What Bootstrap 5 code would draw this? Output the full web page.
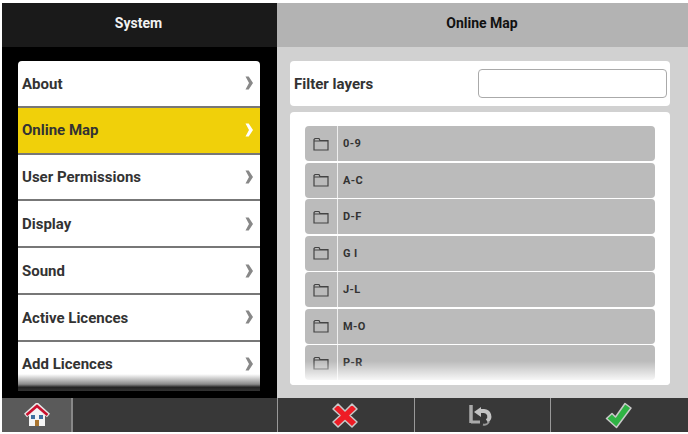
<!DOCTYPE html>
<html lang="en">
<head>
<meta charset="utf-8">
<title>Online Map</title>
<link href="https://cdn.jsdelivr.net/npm/bootstrap@5.3.0/dist/css/bootstrap.min.css" rel="stylesheet">
<style>
html,body{height:100%;overflow:hidden;background:#fff}
body{font-family:Roboto,"Liberation Sans",sans-serif;color:#333}
.shell{width:688px;height:434px;padding:3px 0 2px 2px}
.pane-left{width:275px}
.pane-right{width:411px}
.pane-head{height:44px;font-size:14px;font-weight:700;padding-bottom:3px}
.head-dark{background:#1a1a1a;color:#f2f2f2;padding-right:2px}
.head-light{background:#b3b3b3;color:#111;padding-right:1px}
.body-dark{background:#000;height:351px;padding:14px 17px 7px 16px}
.body-light{background:#d1d1d1;height:351px;padding:14px 18px 13px 13px}
.menu-box{height:330px;background:#fff;border-radius:4px 4px 0 0;overflow:hidden;position:relative}
.menu-row{height:46.8px;flex:none;border-bottom:2px solid #777;padding:1px 4px 0;font-size:15px;font-weight:700;color:#333}
.menu-row.active-row{background:#f0d00a}
.chev{width:8px;height:14px;margin:0 3px 1px 0;flex:none}
.fade-dark{position:absolute;left:0;right:0;bottom:0;height:17px;background:linear-gradient(to bottom,rgba(255,255,255,0),#8a8a8a 60%,#222 78%,#333 100%)}
.filter-box{height:45px;background:#fff;border-radius:4px;padding:0 3px 0 4px;font-size:15px;font-weight:700;margin-bottom:6px}
.filter-label{padding-top:2px}
.filter-input{width:189px;height:29px;border:1px solid #aaa;border-radius:4px;background:#fff}
.layer-box{height:273px;background:#fff;border-radius:4px;padding:14px 15px 0;overflow:hidden;position:relative}
.layer-row{height:35px;flex:none;margin-bottom:1.500px;background:#bbb;border-radius:4px;font-size:11px;font-weight:700;color:#333;letter-spacing:.4px}
.layer-icon{width:33px;height:100%;flex:none;border-right:1.500px solid #eee}
.layer-name{padding:2px 0 0 5px}
.fade-light{position:absolute;left:0;right:0;bottom:0;height:24px;background:linear-gradient(to bottom,rgba(255,255,255,0),#fff 90%)}
.foot{height:34px;background:#383838}
.foot-home{width:71px;background:#5a5a5a;border-right:2px solid #888}
.foot-cell{width:137px;flex:none;border-left:1.500px solid #999}
.foot-cell.mid-cell{width:136px}
.foot-cell.end-cell{width:138px}
.nudge-icon{margin-right:2px}
.nudge-undo{margin-right:4px}
</style>
</head>
<body>
<div class="shell d-flex">
  <div class="pane-left d-flex flex-column">
    <div class="pane-head head-dark d-flex align-items-center justify-content-center">System</div>
    <div class="body-dark">
      <div class="menu-box d-flex flex-column">
        <div class="menu-row d-flex align-items-center justify-content-between"><span>About</span><svg class="chev" viewBox="0 0 8 14"><path d="M.5.500h3.200L8 7l-4.300 6.500H.5L4 7z" fill="#888"/></svg></div>
        <div class="menu-row active-row d-flex align-items-center justify-content-between"><span>Online Map</span><svg class="chev" viewBox="0 0 8 14"><path d="M.5.500h3.200L8 7l-4.300 6.500H.5L4 7z" fill="#fff"/></svg></div>
        <div class="menu-row d-flex align-items-center justify-content-between"><span>User Permissions</span><svg class="chev" viewBox="0 0 8 14"><path d="M.5.500h3.200L8 7l-4.300 6.500H.5L4 7z" fill="#888"/></svg></div>
        <div class="menu-row d-flex align-items-center justify-content-between"><span>Display</span><svg class="chev" viewBox="0 0 8 14"><path d="M.5.500h3.200L8 7l-4.300 6.500H.5L4 7z" fill="#888"/></svg></div>
        <div class="menu-row d-flex align-items-center justify-content-between"><span>Sound</span><svg class="chev" viewBox="0 0 8 14"><path d="M.5.500h3.200L8 7l-4.300 6.500H.5L4 7z" fill="#888"/></svg></div>
        <div class="menu-row d-flex align-items-center justify-content-between"><span>Active Licences</span><svg class="chev" viewBox="0 0 8 14"><path d="M.5.500h3.200L8 7l-4.300 6.500H.5L4 7z" fill="#888"/></svg></div>
        <div class="menu-row d-flex align-items-center justify-content-between"><span>Add Licences</span><svg class="chev" viewBox="0 0 8 14"><path d="M.5.500h3.200L8 7l-4.300 6.500H.5L4 7z" fill="#888"/></svg></div>
        <div class="fade-dark"></div>
      </div>
    </div>
    <div class="foot d-flex">
      <div class="foot-home d-flex align-items-center justify-content-center">
        <svg width="26" height="24" viewBox="0 0 26 24"><path d="M5 11v12h16V11L13 4z" fill="#f4f4f4"/><path d="M1.500 12.500L13 2l11.500 10.500" fill="none" stroke="#e8e8e8" stroke-width="4.500"/><path d="M2.500 12L13 3l10.500 9" fill="none" stroke="#c8102e" stroke-width="2.500"/><rect x="7" y="12" width="4" height="4" fill="#3f6f9f"/><rect x="15" y="12" width="4" height="4" fill="#3f6f9f"/><rect x="11" y="17" width="4" height="6" fill="#a9742f"/></svg>
      </div>
    </div>
  </div>
  <div class="pane-right d-flex flex-column">
    <div class="pane-head head-light d-flex align-items-center justify-content-center">Online Map</div>
    <div class="body-light">
      <div class="filter-box d-flex align-items-center justify-content-between"><span class="filter-label">Filter layers</span><input class="filter-input" type="text" aria-label="Filter layers"></div>
      <div class="layer-box d-flex flex-column">
        <div class="layer-row d-flex align-items-center"><div class="layer-icon d-flex align-items-center justify-content-center"><svg width="16" height="14" viewBox="0 0 16 14"><path d="M1 2.500V13h14V3.500H7L6 1.500H2z M1 4h14" fill="none" stroke="#444" stroke-width="1.200"/></svg></div><div class="layer-name">0-9</div></div>
        <div class="layer-row d-flex align-items-center"><div class="layer-icon d-flex align-items-center justify-content-center"><svg width="16" height="14" viewBox="0 0 16 14"><path d="M1 2.500V13h14V3.500H7L6 1.500H2z M1 4h14" fill="none" stroke="#444" stroke-width="1.200"/></svg></div><div class="layer-name">A-C</div></div>
        <div class="layer-row d-flex align-items-center"><div class="layer-icon d-flex align-items-center justify-content-center"><svg width="16" height="14" viewBox="0 0 16 14"><path d="M1 2.500V13h14V3.500H7L6 1.500H2z M1 4h14" fill="none" stroke="#444" stroke-width="1.200"/></svg></div><div class="layer-name">D-F</div></div>
        <div class="layer-row d-flex align-items-center"><div class="layer-icon d-flex align-items-center justify-content-center"><svg width="16" height="14" viewBox="0 0 16 14"><path d="M1 2.500V13h14V3.500H7L6 1.500H2z M1 4h14" fill="none" stroke="#444" stroke-width="1.200"/></svg></div><div class="layer-name">G I</div></div>
        <div class="layer-row d-flex align-items-center"><div class="layer-icon d-flex align-items-center justify-content-center"><svg width="16" height="14" viewBox="0 0 16 14"><path d="M1 2.500V13h14V3.500H7L6 1.500H2z M1 4h14" fill="none" stroke="#444" stroke-width="1.200"/></svg></div><div class="layer-name">J-L</div></div>
        <div class="layer-row d-flex align-items-center"><div class="layer-icon d-flex align-items-center justify-content-center"><svg width="16" height="14" viewBox="0 0 16 14"><path d="M1 2.500V13h14V3.500H7L6 1.500H2z M1 4h14" fill="none" stroke="#444" stroke-width="1.200"/></svg></div><div class="layer-name">M-O</div></div>
        <div class="layer-row d-flex align-items-center"><div class="layer-icon d-flex align-items-center justify-content-center"><svg width="16" height="14" viewBox="0 0 16 14"><path d="M1 2.500V13h14V3.500H7L6 1.500H2z M1 4h14" fill="none" stroke="#444" stroke-width="1.200"/></svg></div><div class="layer-name">P-R</div></div>
        <div class="fade-light"></div>
      </div>
    </div>
    <div class="foot d-flex">
      <div class="foot-cell d-flex align-items-center justify-content-center">
        <svg class="nudge-icon" width="28" height="27" viewBox="0 0 28 27"><path d="M7 2L14 9 21 2 26 7 19 13.500 26 20 21 25 14 18.500 7 25 2 20 9 13.500 2 7z" fill="#ee1c25" stroke="#c9c9c9" stroke-width="1.500" stroke-linejoin="round"/></svg>
      </div>
      <div class="foot-cell mid-cell d-flex align-items-center justify-content-center">
        <svg class="nudge-undo" width="26" height="22" viewBox="0 0 26 22"><path d="M3 1v18" stroke="#aaa" stroke-width="3.500" fill="none"/><path d="M3 18h9" stroke="#aaa" stroke-width="3" fill="none"/><path d="M11 7h5a5.500 5.500 0 0 1 3 10" fill="none" stroke="#c4c4c4" stroke-width="4"/><path d="M6 8l7-5v10z" fill="#c4c4c4"/><path d="M15 20.500a5 5 0 0 0 6-3" fill="none" stroke="#999" stroke-width="2"/></svg>
      </div>
      <div class="foot-cell end-cell d-flex align-items-center justify-content-center">
        <svg class="nudge-icon" width="27" height="27" viewBox="0 0 27 27"><path d="M1.500 16.500L7 11.500 10.500 15 20 1.500 26 6 11.500 25.500z" fill="#2fb344" stroke="#c9c9c9" stroke-width="1.500" stroke-linejoin="round"/></svg>
      </div>
    </div>
  </div>
</div>
<script src="https://cdn.jsdelivr.net/npm/bootstrap@5.3.0/dist/js/bootstrap.bundle.min.js"></script>
</body>
</html>
